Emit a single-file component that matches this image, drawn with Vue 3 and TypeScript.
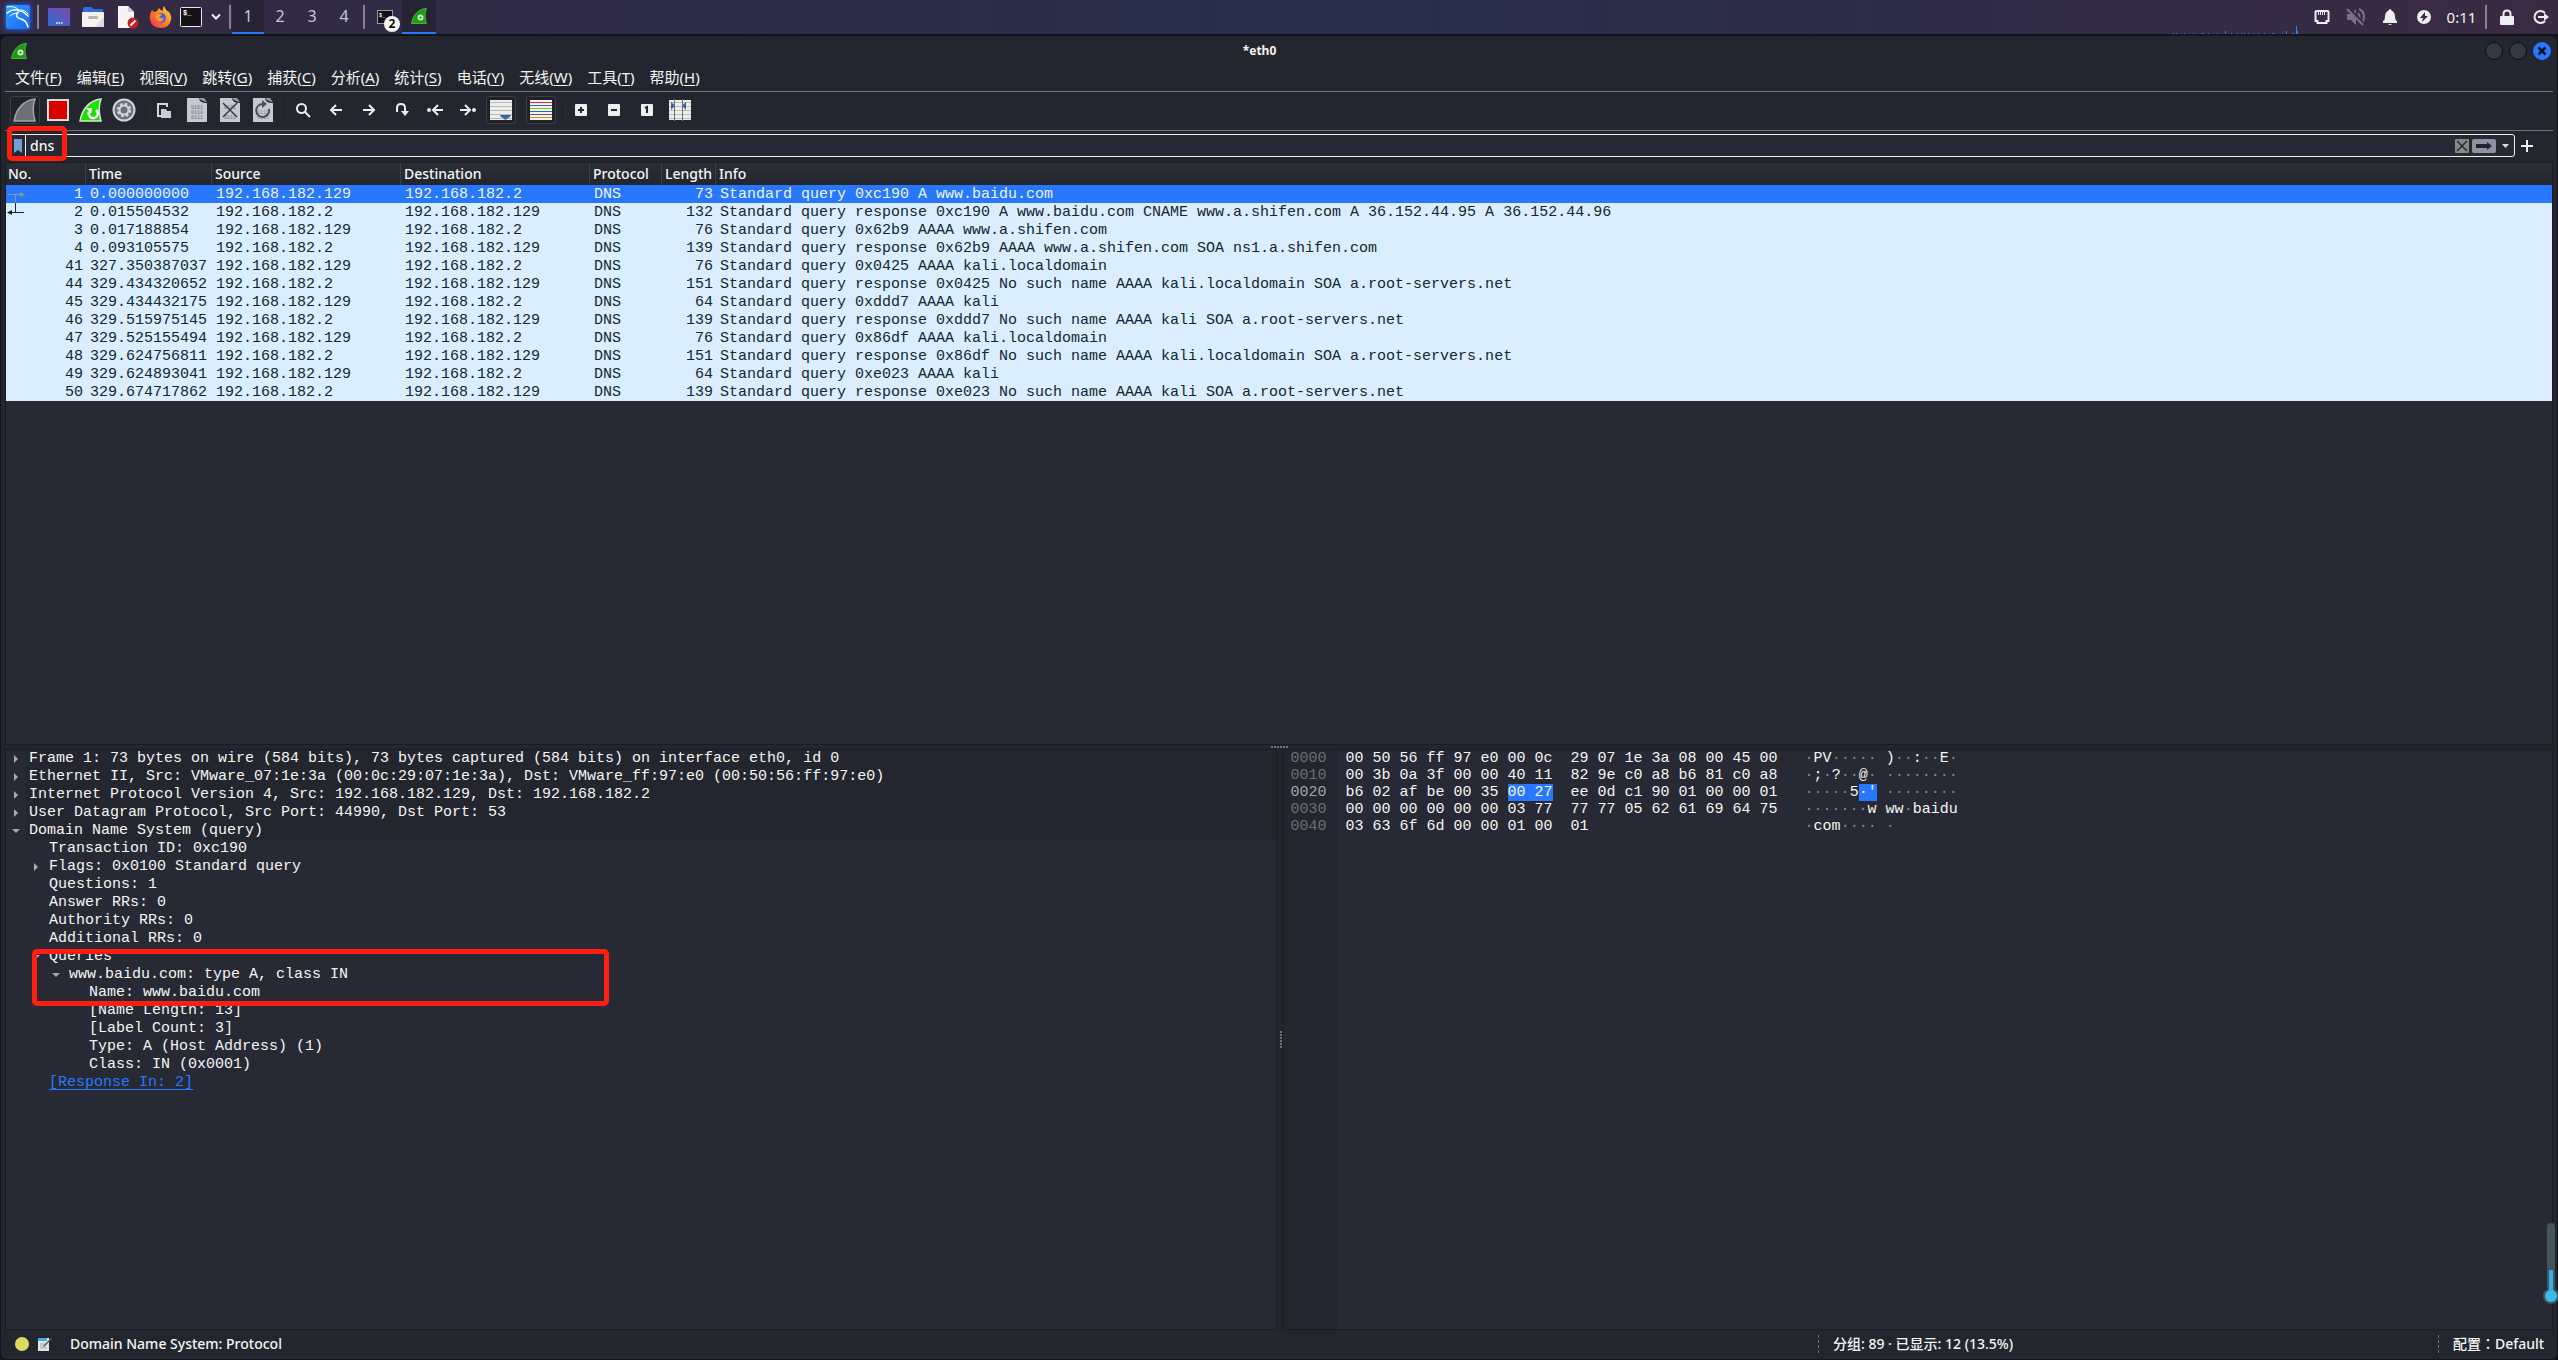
<script setup lang="ts">
import { ref } from 'vue'

interface Packet {
  no: number
  time: string
  src: string
  dst: string
  len: number
  info: string
}

interface TreeRow {
  level: number
  text: string
  state?: 'open' | 'closed'
  link?: boolean
}

interface HexRow {
  offset: string
  hex: string[]
  ascii: string[]
}

const CLIENT = '192.168.182.129'
const GATEWAY = '192.168.182.2'

const filter = ref('dns')
const selected = ref(1)
const workspace = ref(1)

const menus: [string, string][] = [
  ['文件', 'F'], ['编辑', 'E'], ['视图', 'V'], ['跳转', 'G'], ['捕获', 'C'], ['分析', 'A'],
  ['统计', 'S'], ['电话', 'Y'], ['无线', 'W'], ['工具', 'T'], ['帮助', 'H'],
]

const packets: Packet[] = [
  { no: 1, time: '0.000000000', src: CLIENT, dst: GATEWAY, len: 73, info: 'Standard query 0xc190 A www.baidu.com' },
  { no: 2, time: '0.015504532', src: GATEWAY, dst: CLIENT, len: 132, info: 'Standard query response 0xc190 A www.baidu.com CNAME www.a.shifen.com A 36.152.44.95 A 36.152.44.96' },
  { no: 3, time: '0.017188854', src: CLIENT, dst: GATEWAY, len: 76, info: 'Standard query 0x62b9 AAAA www.a.shifen.com' },
  { no: 4, time: '0.093105575', src: GATEWAY, dst: CLIENT, len: 139, info: 'Standard query response 0x62b9 AAAA www.a.shifen.com SOA ns1.a.shifen.com' },
  { no: 41, time: '327.350387037', src: CLIENT, dst: GATEWAY, len: 76, info: 'Standard query 0x0425 AAAA kali.localdomain' },
  { no: 44, time: '329.434320652', src: GATEWAY, dst: CLIENT, len: 151, info: 'Standard query response 0x0425 No such name AAAA kali.localdomain SOA a.root-servers.net' },
  { no: 45, time: '329.434432175', src: CLIENT, dst: GATEWAY, len: 64, info: 'Standard query 0xddd7 AAAA kali' },
  { no: 46, time: '329.515975145', src: GATEWAY, dst: CLIENT, len: 139, info: 'Standard query response 0xddd7 No such name AAAA kali SOA a.root-servers.net' },
  { no: 47, time: '329.525155494', src: CLIENT, dst: GATEWAY, len: 76, info: 'Standard query 0x86df AAAA kali.localdomain' },
  { no: 48, time: '329.624756811', src: GATEWAY, dst: CLIENT, len: 151, info: 'Standard query response 0x86df No such name AAAA kali.localdomain SOA a.root-servers.net' },
  { no: 49, time: '329.624893041', src: CLIENT, dst: GATEWAY, len: 64, info: 'Standard query 0xe023 AAAA kali' },
  { no: 50, time: '329.674717862', src: GATEWAY, dst: CLIENT, len: 139, info: 'Standard query response 0xe023 No such name AAAA kali SOA a.root-servers.net' },
]

const tree: TreeRow[] = [
  { level: 0, state: 'closed', text: 'Frame 1: 73 bytes on wire (584 bits), 73 bytes captured (584 bits) on interface eth0, id 0' },
  { level: 0, state: 'closed', text: 'Ethernet II, Src: VMware_07:1e:3a (00:0c:29:07:1e:3a), Dst: VMware_ff:97:e0 (00:50:56:ff:97:e0)' },
  { level: 0, state: 'closed', text: 'Internet Protocol Version 4, Src: 192.168.182.129, Dst: 192.168.182.2' },
  { level: 0, state: 'closed', text: 'User Datagram Protocol, Src Port: 44990, Dst Port: 53' },
  { level: 0, state: 'open', text: 'Domain Name System (query)' },
  { level: 1, text: 'Transaction ID: 0xc190' },
  { level: 1, state: 'closed', text: 'Flags: 0x0100 Standard query' },
  { level: 1, text: 'Questions: 1' },
  { level: 1, text: 'Answer RRs: 0' },
  { level: 1, text: 'Authority RRs: 0' },
  { level: 1, text: 'Additional RRs: 0' },
  { level: 1, state: 'open', text: 'Queries' },
  { level: 2, state: 'open', text: 'www.baidu.com: type A, class IN' },
  { level: 3, text: 'Name: www.baidu.com' },
  { level: 3, text: '[Name Length: 13]' },
  { level: 3, text: '[Label Count: 3]' },
  { level: 3, text: 'Type: A (Host Address) (1)' },
  { level: 3, text: 'Class: IN (0x0001)' },
  { level: 1, link: true, text: '[Response In: 2]' },
]

// Each row is split into the part before, inside and after the selected bytes.
const hexRows: HexRow[] = [
  { offset: '0000', hex: ['00 50 56 ff 97 e0 00 0c  29 07 1e 3a 08 00 45 00'], ascii: ['·PV····· )··:··E·'] },
  { offset: '0010', hex: ['00 3b 0a 3f 00 00 40 11  82 9e c0 a8 b6 81 c0 a8'], ascii: ['·;·?··@· ········'] },
  { offset: '0020', hex: ['b6 02 af be 00 35 ', '00 27', '  ee 0d c1 90 01 00 00 01'], ascii: ['·····5', "·'", ' ········'] },
  { offset: '0030', hex: ['00 00 00 00 00 00 03 77  77 77 05 62 61 69 64 75'], ascii: ['·······w ww·baidu'] },
  { offset: '0040', hex: ['03 63 6f 6d 00 00 01 00  01                     '], ascii: ['·com···· ·'] },
]

const runs = (part: string): string[] => part.match(/·+|[^·]+/g) ?? []

const load: [number, number][] = [
  [0, 1], [3, 1], [11, 1], [20, 1], [28, 1], [30, 1], [35, 1], [44, 1], [52, 3], [58, 1], [64, 1], [68, 1], [71, 1],
  [75, 1], [80, 1], [85, 1], [91, 1], [99, 1], [101, 1], [109, 1], [113, 3], [119, 1], [121, 1], [123, 8], [124, 3],
]
</script>

<template>
  <div class="desktop">
    <header class="panel">
      <button class="launch kali" aria-label="Applications">
        <svg width="36" height="34" viewBox="0 0 36 34">
          <defs>
            <linearGradient id="kali-bg" x1="0" y1="0" x2="1" y2="1">
              <stop offset="0" stop-color="#2ba2ff" /><stop offset="1" stop-color="#1f62f6" />
            </linearGradient>
            <filter id="kali-glow" x="-30%" y="-30%" width="160%" height="160%"><feGaussianBlur stdDeviation="2" /></filter>
          </defs>
          <rect x="4" y="4" width="26" height="26" rx="3" fill="#1b58d8" filter="url(#kali-glow)" />
          <rect x="5" y="5" width="24" height="24" rx="2" fill="url(#kali-bg)" />
          <g fill="none" stroke="#fff" stroke-linecap="round">
            <path d="M6 7c5-1 9 0 12 3" stroke-width="1" />
            <path d="M6 13c4-3 9-4 13-2 3 0 5 2 8 5" stroke-width="1.500" />
            <path d="M9 16c2-2 5-3 8-3" stroke-width="1" />
            <path d="M17 12c-3 4-1 6 3 7 4 1 6 4 7 8" stroke-width="1.500" />
            <path d="M19 10c4 0 6 1 8 4" stroke-width="1" />
          </g>
        </svg>
      </button>
      <i class="bar"></i>
      <button class="launch" aria-label="Show desktop">
        <svg width="24" height="24" viewBox="0 0 24 24">
          <defs><linearGradient id="desk" x1="0" y1="1" x2="1" y2="0"><stop offset="0" stop-color="#2f6ad2" /><stop offset="1" stop-color="#7b4ba6" /></linearGradient></defs>
          <rect x="1" y="3" width="22" height="18" rx="1" fill="url(#desk)" />
          <path d="M9 18h1.500M11.500 18h1.500M14 18h1.500" stroke="#fff" stroke-width="1.500" />
        </svg>
      </button>
      <button class="launch" aria-label="Files">
        <svg width="24" height="24" viewBox="0 0 24 24">
          <path d="M2 4q0-2 2-2h6q1 0 2 2h9q1 0 1 1v4H2z" fill="#2f6fdc" />
          <rect x="1" y="7" width="22" height="15" rx="1" fill="#f2f2f2" /><path d="M14 22l9-10v10z" fill="#dcdcdc" />
          <rect x="7" y="11" width="10" height="3" rx="1.500" fill="#b4b4b4" />
        </svg>
      </button>
      <button class="launch" aria-label="Text editor">
        <svg width="24" height="24" viewBox="0 0 24 24">
          <path d="M3 1h10l6 6v16H3z" fill="#f5f5f5" /><path d="M13 1l6 6h-6z" fill="#cfcfcf" />
          <circle cx="18" cy="18" r="5.500" fill="#c81e1e" /><path d="M15.500 20.500l5-5" stroke="#fff" stroke-width="2" />
        </svg>
      </button>
      <button class="launch" aria-label="Firefox">
        <svg width="24" height="24" viewBox="0 0 24 24">
          <defs><linearGradient id="fox" x1="1" y1="0" x2="0" y2="1"><stop offset="0" stop-color="#ffde45" /><stop offset=".45" stop-color="#ff8a24" /><stop offset="1" stop-color="#f0264e" /></linearGradient></defs>
          <path d="M3 5l2 2 3-1 2-3q1 2 4 3-1-3 1-5 2 5 5 6 3 4 2 8-2 8-10 8-9 0-11-8Q0 10 3 5z" fill="url(#fox)" />
          <circle cx="12" cy="13" r="5" fill="#4a5fd8" /><path d="M7 10q4-3 6 0l-3 2q2 2 5 1-1 4-5 4-4-2-3-7z" fill="#ff9a22" />
        </svg>
      </button>
      <button class="launch term" aria-label="Terminal">
        <svg width="24" height="24" viewBox="0 0 24 24">
          <rect x="1.500" y="2.500" width="21" height="19" rx="1" fill="#141414" stroke="#e8e8e8" />
          <text x="4" y="10" fill="#fff" font-family="Liberation Mono, monospace" font-weight="bold" font-size="7">$_</text>
        </svg>
      </button>
      <button class="more" aria-label="More terminals">
        <svg width="12" height="8" viewBox="0 0 12 8"><path d="M2 1.500l4 4 4-4" fill="none" stroke="#eee" stroke-width="2" /></svg>
      </button>
      <i class="bar"></i>
      <nav class="workspaces" aria-label="Workspaces">
        <button v-for="n in 4" :key="n" :class="{ on: workspace === n }" @click="workspace = n">{{ n }}</button>
      </nav>
      <i class="bar"></i>
      <button class="task" aria-label="Terminal windows">
        <svg width="34" height="34" viewBox="0 0 34 34">
          <rect x="9.500" y="10.500" width="15" height="13" fill="#111" stroke="#9a9a9a" />
          <text x="11" y="17" fill="#fff" font-family="Liberation Mono, monospace" font-weight="bold" font-size="5">$_</text>
          <circle cx="24" cy="24" r="8" fill="#f4f4f4" />
          <text x="24" y="28" text-anchor="middle" fill="#111" font-family="Noto Sans, sans-serif" font-weight="bold" font-size="12">2</text>
        </svg>
      </button>
      <button class="task on" aria-label="Wireshark">
        <svg width="18" height="18" viewBox="0 0 24 24">
          <path d="M2 22C4 10 12 2 22 2c-3 7-2 14 0 20z" fill="#1c9c10" stroke="#62c450" /><circle cx="14" cy="14" r="4" fill="#d6ecd2" /><circle cx="14" cy="14" r="1.500" fill="#1c9c10" />
        </svg>
      </button>
      <span class="grow"></span>
      <svg class="graph" width="126" height="9" viewBox="0 0 126 9">
        <rect v-for="[x, h] in load" :key="x" :x="x" :y="9 - h" width="1" :height="h" fill="#2f7df6" />
      </svg>
      <div class="tray">
        <button aria-label="Network">
          <svg width="18" height="18" viewBox="0 0 18 18"><path d="M2.500 4q0-1 1-1h11q1 0 1 1v9h-2v2h-9v-2h-2z" fill="none" stroke="#eee" stroke-width="2" /><path d="M5.500 4v3M7.500 4v3M9.500 4v3M11.500 4v3" stroke="#eee" /></svg>
        </button>
        <button aria-label="Volume muted">
          <svg width="20" height="18" viewBox="0 0 20 18"><path d="M1 6h4l5-5v16l-5-5H1z" fill="#7b7484" /><path d="M12 5q3 4 0 8M13 1q7 3 4 13" fill="none" stroke="#7b7484" stroke-width="2" /><path d="M2 0l16 17" stroke="#352c43" stroke-width="4" /><path d="M1 1l16 16" stroke="#7b7484" stroke-width="2" /></svg>
        </button>
        <button aria-label="Notifications">
          <svg width="16" height="16" viewBox="0 0 16 16"><path d="M8 0q1 0 1.500 1.500Q13 3 13 8q0 3 2 4v2H1v-2q2-1 2-4 0-5 3.500-6.500Q7 0 8 0zM6 15h4q-2 2-4 0z" fill="#eee" /></svg>
        </button>
        <button aria-label="Power">
          <svg width="16" height="16" viewBox="0 0 16 16"><circle cx="8" cy="8" r="7" fill="#eee" /><path d="M9 3L4 9h3l-1 4 6-6H9z" fill="#372b44" /></svg>
        </button>
        <time>0:11</time>
        <i class="bar"></i>
        <button aria-label="Lock screen">
          <svg width="16" height="16" viewBox="0 0 16 16"><rect x="1" y="7" width="14" height="9" rx="1" fill="#eee" /><path d="M4.500 8V5q0-3.500 3.500-3.500T11.500 5v3" fill="none" stroke="#eee" stroke-width="2" /></svg>
        </button>
        <button aria-label="Log out">
          <svg width="16" height="16" viewBox="0 0 16 16"><path d="M12 4a6 6 0 1 0 0 8" fill="none" stroke="#eee" stroke-width="2" /><path d="M5 7h6V4l5 4-5 4V9H5z" fill="#eee" /></svg>
        </button>
      </div>
    </header>

    <main class="window">
      <div class="titlebar">
        <svg width="18" height="18" viewBox="0 0 24 24">
          <path d="M2 22C4 10 12 2 22 2c-3 7-2 14 0 20z" fill="#1c9c10" stroke="#62c450" /><circle cx="14" cy="14" r="4" fill="#d6ecd2" /><circle cx="14" cy="14" r="1.500" fill="#1c9c10" />
        </svg>
        <h1>*eth0</h1>
        <div class="winbtns">
          <button aria-label="Minimize"></button>
          <button aria-label="Maximize"></button>
          <button class="close" aria-label="Close"><svg width="10" height="10" viewBox="0 0 10 10"><path d="M1.500 1.500l7 7M8.500 1.500l-7 7" stroke="#0b1220" stroke-width="2.500" /></svg></button>
        </div>
      </div>

      <nav class="menubar">
        <button v-for="[name, key] in menus" :key="key">{{ name }}(<u>{{ key }}</u>)</button>
      </nav>

      <div class="toolbar">
        <button class="framed" aria-label="Start capture">
          <svg width="24" height="24" viewBox="0 0 24 24"><path d="M1 23C3 11 11 2 22 1c-3 8-2 15 0 22z" fill="#6c6f78" stroke="#a0a3aa" stroke-width="1.500" /></svg>
        </button>
        <button aria-label="Stop capture">
          <svg width="24" height="24" viewBox="0 0 24 24"><rect x="2" y="2" width="20" height="20" fill="#dd0000" stroke="#dededb" stroke-width="2" /></svg>
        </button>
        <button aria-label="Restart capture">
          <svg width="24" height="24" viewBox="0 0 24 24"><path d="M1 23C3 11 11 2 22 1c-3 8-2 15 0 22z" fill="#1be000" stroke="#d5e8cf" stroke-width="1.500" /><path d="M17 12a4.500 4.500 0 1 1-7 2" fill="none" stroke="#fff" stroke-width="2.500" /><path d="M7 10l6 0-1 6z" fill="#fff" /></svg>
        </button>
        <button aria-label="Capture options">
          <svg width="24" height="24" viewBox="0 0 24 24"><circle cx="12" cy="12" r="10.500" fill="#6b6f7b" stroke="#d2d4dc" stroke-width="2" /><circle cx="12" cy="12" r="6" fill="none" stroke="#d2d4dc" stroke-width="2.500" stroke-dasharray="2.700 2" /><circle cx="12" cy="12" r="4.500" fill="none" stroke="#d2d4dc" stroke-width="2" /></svg>
        </button>
        <i class="sep"></i>
        <button aria-label="Open file">
          <svg width="16" height="16" viewBox="0 0 16 16"><path d="M5 14H2V2h9v3" fill="none" stroke="#d6d6d8" stroke-width="2" /><path d="M5 7h5l1 2h4v7H5z" fill="#c9cbd6" /></svg>
        </button>
        <button aria-label="Save file">
          <svg width="20" height="24" viewBox="0 0 20 24"><path d="M0 0h12q0 5 8 5v19H0z" fill="#c6c8d1" /><path d="M12 0q2 3 8 4l-3-4z" fill="#9698a1" /><g fill="#6c6f7c" font-family="Liberation Mono, monospace" font-size="5"><text x="4" y="11">0101</text><text x="4" y="16">0110</text><text x="4" y="21">0111</text></g></svg>
        </button>
        <button aria-label="Close file">
          <svg width="20" height="24" viewBox="0 0 20 24"><path d="M0 0h12q0 5 8 5v19H0z" fill="#c6c8d1" /><path d="M12 0q2 3 8 4l-3-4z" fill="#9698a1" /><g fill="#6c6f7c" font-family="Liberation Mono, monospace" font-size="5"><text x="4" y="11">0101</text><text x="4" y="21">0111</text></g><path d="M3 5l14 14M17 5L3 19" stroke="#3a3d48" stroke-width="1.500" /></svg>
        </button>
        <button aria-label="Reload file">
          <svg width="20" height="24" viewBox="0 0 20 24"><path d="M0 0h12q0 5 8 5v19H0z" fill="#c6c8d1" /><path d="M12 0q2 3 8 4l-3-4z" fill="#9698a1" /><g fill="#8b8e99" font-family="Liberation Mono, monospace" font-size="5"><text x="4" y="16">0110</text><text x="4" y="21">0111</text></g><path d="M10 6a6.500 6.500 0 1 0 6 5" fill="none" stroke="#4c4f5a" stroke-width="2" /><path d="M9 2l5 4-5 4z" fill="#4c4f5a" /></svg>
        </button>
        <i class="sep"></i>
        <button aria-label="Find packet">
          <svg width="16" height="16" viewBox="0 0 16 16"><circle cx="6.500" cy="6.500" r="4.500" fill="none" stroke="#eee" stroke-width="2" /><path d="M10 10l5 5" stroke="#eee" stroke-width="2" /></svg>
        </button>
        <button aria-label="Previous packet">
          <svg width="16" height="16" viewBox="0 0 16 16"><path d="M14 8H3M8 3L3 8l5 5" fill="none" stroke="#eee" stroke-width="2" /></svg>
        </button>
        <button aria-label="Next packet">
          <svg width="16" height="16" viewBox="0 0 16 16"><path d="M2 8h11M8 3l5 5-5 5" fill="none" stroke="#eee" stroke-width="2" /></svg>
        </button>
        <button aria-label="Go to packet">
          <svg width="16" height="16" viewBox="0 0 16 16"><path d="M3 10V6q0-4 4-4t4 4v5" fill="none" stroke="#eee" stroke-width="2" /><path d="M7 9l4 5 4-5z" fill="#eee" /></svg>
        </button>
        <button aria-label="First packet">
          <svg width="18" height="16" viewBox="0 0 18 16"><circle cx="3" cy="8" r="2" fill="#eee" /><path d="M17 8H8M12 3L7 8l5 5" fill="none" stroke="#eee" stroke-width="2" /></svg>
        </button>
        <button aria-label="Last packet">
          <svg width="18" height="16" viewBox="0 0 18 16"><circle cx="15" cy="8" r="2" fill="#eee" /><path d="M1 8h9M6 3l5 5-5 5" fill="none" stroke="#eee" stroke-width="2" /></svg>
        </button>
        <button class="framed" aria-label="Auto scroll">
          <svg width="22" height="20" viewBox="0 0 22 20"><rect width="22" height="20" fill="#edeeeb" /><path d="M0 2.500h22M0 6.500h22M0 10.500h22M0 14.500h22M0 18.500h22" stroke="#b9bbb6" /><path d="M10 15h11q0 2-3 3l-2.500 2-2.500-2q-3-1-3-3z" fill="#3465a4" /></svg>
        </button>
        <i class="sep"></i>
        <button class="framed" aria-label="Colorize packets">
          <svg width="22" height="20" viewBox="0 0 22 20"><rect width="22" height="20" fill="#f0f1ee" /><path d="M0 2.500h22" stroke="#ef2929" /><path d="M0 5.500h22M0 11.500h22" stroke="#3465a4" /><path d="M0 8.500h22" stroke="#73d216" /><path d="M0 14.500h22" stroke="#75507b" /><path d="M0 17.500h22" stroke="#c4a000" /></svg>
        </button>
        <i class="sep"></i>
        <button aria-label="Zoom in">
          <svg width="12" height="12" viewBox="0 0 12 12"><rect width="12" height="12" rx="1" fill="#eee" /><path d="M6 3v6M3 6h6" stroke="#22252d" stroke-width="2" /></svg>
        </button>
        <button aria-label="Zoom out">
          <svg width="12" height="12" viewBox="0 0 12 12"><rect width="12" height="12" rx="1" fill="#eee" /><path d="M3 6h6" stroke="#22252d" stroke-width="2" /></svg>
        </button>
        <button aria-label="Normal size">
          <svg width="12" height="12" viewBox="0 0 12 12"><rect width="12" height="12" rx="1" fill="#eee" /><path d="M4 4l2-1v6" fill="none" stroke="#22252d" stroke-width="2" /></svg>
        </button>
        <button aria-label="Resize columns">
          <svg width="22" height="22" viewBox="0 0 22 22"><rect y="1" width="22" height="20" fill="#edeeeb" /><path d="M0 3.500h22M0 7.500h22M0 11.500h22M0 15.500h22M0 19.500h22" stroke="#b9bbb6" /><path d="M5.500 0v22M13.500 0v22" stroke="#6d6f6b" /><path d="M2 3l4 3.500L2 11zM17 3l-4 3.500L17 11z" fill="#3465a4" /></svg>
        </button>
      </div>

      <div class="filterbar">
        <div class="field">
          <button class="mark" aria-label="Bookmarks"><svg width="8" height="14" viewBox="0 0 8 14"><path d="M0 0h8v14l-4-3-4 3z" fill="#729fcf" /></svg></button>
          <input v-model="filter" type="text" aria-label="Display filter" spellcheck="false">
          <button aria-label="Clear filter"><svg width="14" height="14" viewBox="0 0 14 14"><rect width="14" height="14" rx="1" fill="#888a85" /><path d="M2 2l10 10M12 2L2 12" stroke="#2a2c33" stroke-width="1.500" /></svg></button>
          <button aria-label="Apply filter"><svg width="24" height="14" viewBox="0 0 24 14"><rect width="24" height="14" rx="2" fill="#9092a1" /><path d="M4 5h11V3l5 4-5 4V9H4z" fill="#23252e" /></svg></button>
          <button class="drop" aria-label="Recent filters"><svg width="7" height="4" viewBox="0 0 7 4"><path d="M0 0h7L3.500 4z" fill="#d8d8d8" /></svg></button>
        </div>
        <button class="plus" aria-label="Add filter button"><svg width="12" height="12" viewBox="0 0 12 12"><path d="M6 0v12M0 6h12" stroke="#eee" stroke-width="2" /></svg></button>
        <span class="callout on-filter"></span>
      </div>

      <section class="pane list">
        <table>
          <colgroup><col class="c-no"><col class="c-time"><col class="c-addr"><col class="c-addr"><col class="c-proto"><col class="c-len"><col></colgroup>
          <thead>
            <tr><th>No.</th><th>Time</th><th>Source</th><th>Destination</th><th>Protocol</th><th>Length</th><th>Info</th></tr>
          </thead>
          <tbody>
            <tr v-for="p in packets" :key="p.no" :class="{ selected: selected === p.no }" @click="selected = p.no">
              <td class="num">
                <svg v-if="p.no === 1" class="rel" width="20" height="18" viewBox="0 0 20 18"><path d="M2 9.500h13M9.500 9.500V18" stroke="#8a93a3" fill="none" /><path d="M14 7l5 2.500-5 2.500z" fill="#8a93a3" /></svg>
                <svg v-if="p.no === 2" class="rel" width="20" height="18" viewBox="0 0 20 18"><path d="M4 9.500h14M9.500 0v9.500" stroke="#12272e" fill="none" /><path d="M6 7L1 9.500 6 12z" fill="#12272e" /></svg>
                {{ p.no }}
              </td>
              <td>{{ p.time }}</td>
              <td>{{ p.src }}</td>
              <td>{{ p.dst }}</td>
              <td>DNS</td>
              <td class="num">{{ p.len }}</td>
              <td>{{ p.info }}</td>
            </tr>
          </tbody>
        </table>
      </section>

      <div class="split-h"><i v-for="n in 6" :key="n"></i></div>

      <div class="lower">
        <section class="pane tree">
          <ul>
            <li v-for="row in tree" :key="row.text" :style="{ paddingLeft: row.level * 20 + 'px' }">
              <button v-if="row.state" class="twist" :aria-label="row.state === 'open' ? 'Collapse' : 'Expand'">
                <svg v-if="row.state === 'closed'" width="4" height="8" viewBox="0 0 4 8"><path d="M0 0l4 4-4 4z" fill="#a9aaae" /></svg>
                <svg v-else width="8" height="4" viewBox="0 0 8 4"><path d="M0 0h8L4 4z" fill="#a9aaae" /></svg>
              </button>
              <span v-else class="twist"></span>
              <span class="label" :class="{ top: row.level === 0 }"><a v-if="row.link" href="#2">{{ row.text }}</a><template v-else>{{ row.text }}</template></span>
            </li>
          </ul>
          <span class="callout on-query"></span>
        </section>
        <div class="split-v"><i v-for="n in 6" :key="n"></i></div>
        <section class="pane bytes">
          <div class="offsets"><div v-for="r in hexRows" :key="r.offset" :class="{ lit: r.hex.length > 1 }">{{ r.offset }}</div></div>
          <div class="dump">
            <div v-for="r in hexRows" :key="r.offset"><span v-for="(h, i) in r.hex" :key="i" :class="{ hit: i === 1 }">{{ h }}</span><span>{{ '   ' }}</span><span v-for="(a, i) in r.ascii" :key="i" :class="{ hit: i === 1 }"><span v-for="(t, j) in runs(a)" :key="j" :class="{ dot: t[0] === '·' }">{{ t }}</span></span></div>
          </div>
        </section>
      </div>

      <footer class="status">
        <button class="expert" aria-label="Expert information"></button>
        <button aria-label="Capture comment">
          <svg width="14" height="14" viewBox="0 0 14 14"><rect y="1" width="11" height="13" fill="#e4e6e4" /><rect y="1" width="9" height="3" fill="#3daee9" /><path d="M2 7h6M2 9h5M2 11h7" stroke="#aaa" /><path d="M13 1L6 8l-1 2 2-1 7-7z" fill="#55585a" /></svg>
        </button>
        <span class="field-name">Domain Name System: Protocol</span>
        <span class="counts">分组: 89 · 已显示: 12 (13.5%)</span>
        <span class="profile">配置：Default</span>
      </footer>
    </main>

    <svg class="gauge" width="16" height="84" viewBox="0 0 16 84">
      <rect x="4" y="1" width="8" height="72" rx="4" fill="#46545f" /><circle cx="8" cy="74" r="8" fill="#46545f" />
      <rect x="6" y="48" width="4" height="24" rx="1" fill="#2fb4e6" /><circle cx="8" cy="74" r="6" fill="#35bdeb" />
    </svg>
  </div>
</template>

<style>
body { background: #17181d; }
</style>

<style scoped>
.desktop {
  position: relative;
  display: flex;
  flex-direction: column;
  height: 100vh;
  overflow: hidden;
  box-sizing: border-box;
  color: #f5f5f5;
  background: #14151a;
  font: 500 14px/20px "Noto Sans", "Noto Sans CJK SC", sans-serif;
}
button { border: 0; padding: 0; background: none; color: inherit; font: inherit; display: flex; align-items: center; justify-content: center; }
svg { display: block; flex: none; }
.grow { flex: 1; }

.panel { display: flex; align-items: center; height: 34px; flex: none; background: linear-gradient(90deg, #352a42, #302b46 20%, #28304c 52%, #2f2c48 75%, #3b2b42); }
.bar { width: 2px; height: 24px; background: #88828f; flex: none; }
.kali { width: 37px; height: 34px; }
.launch + .launch { margin-left: 10px; }
.launch + .term { margin-left: 6px; }
.bar + .launch { margin-left: 8px; }
.more { width: 26px; height: 34px; }
.workspaces { display: flex; margin: 0 3px 0 1px; font-size: 16px; font-weight: 400; }
.workspaces button { width: 32px; height: 34px; box-sizing: border-box; border-bottom: 2px solid transparent; color: #c9c6cf; }
.workspaces .on, .task.on { background: #272337; border-bottom-color: #2777ff; }
.task { width: 34px; height: 34px; box-sizing: border-box; border-bottom: 2px solid transparent; }
.bar + .task { margin-left: 3px; border: 0; }
.graph { align-self: flex-end; margin-right: 6px; }
.tray { display: flex; align-items: center; }
.tray button { width: 34px; height: 34px; }
.tray time { width: 41px; text-align: center; font-size: 15px; font-weight: 400; margin-right: 3px; }
.tray .bar { margin: 0 3px 0 0; }

.window { display: flex; flex-direction: column; flex: 1; min-height: 0; margin: 2px 1px 1px; padding: 0 4px; border-radius: 6px; background: #23262e; }
.titlebar { display: grid; grid-template-columns: 1fr auto 1fr; align-items: center; height: 32px; box-sizing: border-box; padding: 0 2px 2px 5px; }
.titlebar h1 { margin: 0; padding-right: 42px; font-size: 12px; font-weight: 700; line-height: 18px; }
.winbtns { display: flex; justify-content: flex-end; gap: 6px; }
.winbtns button { width: 18px; height: 18px; box-sizing: border-box; border: 1px solid #0b0c10; border-radius: 9px; background: #343843; }
.winbtns .close { background: #2777ff; border-color: #2777ff; }

.menubar { display: flex; gap: 15px; height: 24px; box-sizing: border-box; padding: 0 0 4px 10px; border-bottom: 1px solid #6e707a; font-size: 15px; font-weight: 400; line-height: 19px; }
.menubar u { text-underline-offset: 2px; }

.toolbar { display: flex; align-items: center; gap: 3px; height: 39px; box-sizing: border-box; padding: 0 0 2px 5px; border-bottom: 1px solid #6e707a; }
.toolbar button { width: 30px; height: 28px; box-sizing: border-box; }
.toolbar .framed { border: 1px solid #3c3f49; border-radius: 3px; background: #20222a; }
.sep { width: 4px; height: 20px; background: linear-gradient(90deg, #1d1f26 1px, transparent 1px) 3px 0 no-repeat; }

.filterbar { position: relative; display: flex; align-items: center; height: 31px; box-sizing: border-box; padding: 0 20px 2px 4px; }
.field { display: flex; align-items: center; flex: 1; height: 23px; box-sizing: border-box; border: 1px solid #efeee4; border-radius: 3px; background: #272a34; }
.mark { width: 16px; height: 21px; border-right: 1px solid #efeee4; }
.field input { flex: 1; min-width: 0; height: 21px; padding: 0 0 0 4px; border: 0; outline: 0; background: none; color: inherit; font: inherit; }
.field button + button { margin-left: 3px; }
.field button + .drop { width: 18px; height: 21px; margin-left: 0; }
.plus { margin-left: 6px; }
.callout { position: absolute; border: 5px solid #ff1e10; border-radius: 5px; box-sizing: border-box; pointer-events: none; }
.on-filter { left: 2px; top: -5px; width: 60px; height: 35px; }

.pane { box-sizing: border-box; border: 1px solid #1a1c22; background: #272a34; min-width: 0; min-height: 0; overflow: hidden; }
.list { flex: 1 1 0; font: 15px/17px "Liberation Mono", monospace; }
table { width: 100%; table-layout: fixed; border-collapse: separate; border-spacing: 0; }
.c-no { width: 80px; }
.c-time { width: 126px; }
.c-addr { width: 189px; }
.c-proto { width: 72px; }
.c-len { width: 54px; }
th { height: 22px; box-sizing: border-box; padding: 0 0 0 3px; border-right: 1px solid #3d4048; background: linear-gradient(#2b2e36, #23262d); text-align: left; font: 500 14px/22px "Noto Sans", sans-serif; white-space: nowrap; }
th:first-child { padding-left: 2px; }
th:last-child { border-right: 0; }
td { position: relative; height: 18px; box-sizing: border-box; padding: 1px 0 0 4px; overflow: hidden; white-space: nowrap; color: #12272e; background: #daeeff; }
td.num { text-align: right; padding: 1px 3px 0 0; }
.selected td { color: #eef3fb; background: #2777ff; }
.rel { position: absolute; left: 0; top: 0; }

.split-h { display: flex; justify-content: center; align-items: center; gap: 1px; height: 4px; }
.split-v { display: flex; flex-direction: column; justify-content: center; align-items: flex-end; gap: 1px; width: 5px; }
.split-h i, .split-v i { width: 2px; height: 2px; background: #70727a; }

.lower { display: flex; flex: 1 1 0; min-height: 0; font: 15px/18px "Liberation Mono", monospace; }
.tree { position: relative; flex: 1 1 0; }
.tree ul { margin: 0; padding: 0; list-style: none; }
.tree li { display: flex; height: 18px; }
.twist { width: 20px; flex: none; }
.label { flex: 1; padding-left: 3px; white-space: nowrap; }
.label.top { background: #23262e; }
.label a { color: #2777ff; text-underline-offset: 3px; }
.on-query { left: 26px; top: 199px; width: 577px; height: 57px; }

.bytes { flex: 1 1 0; display: flex; line-height: 17px; }
.offsets { width: 46px; padding-left: 8px; background: #23262e; color: #6c6e76; }
.offsets .lit { color: #a2a4aa; }
.dump { padding-left: 9px; white-space: pre; }
.hit { background: #2777ff; }
.dot { color: #85878d; }
.hit .dot { color: #f5f5f5; }

.status { display: flex; align-items: center; height: 29px; box-sizing: border-box; padding-bottom: 2px; flex: none; }
.expert { width: 14px; height: 14px; margin: 0 9px 0 10px; border-radius: 7px; background: #dcdc5c; }
.field-name { flex: 1; margin-left: 18px; }
.counts, .profile { padding-left: 14px; border-left: 1px dashed #6e707a; line-height: 18px; box-sizing: border-box; font-size: 14px; }
.counts { width: 620px; }
.profile { width: 115px; white-space: nowrap; font-family: "Noto Sans", "Noto Sans CJK TC", sans-serif; }
.gauge { position: absolute; right: -1px; bottom: 54px; }
</style>
